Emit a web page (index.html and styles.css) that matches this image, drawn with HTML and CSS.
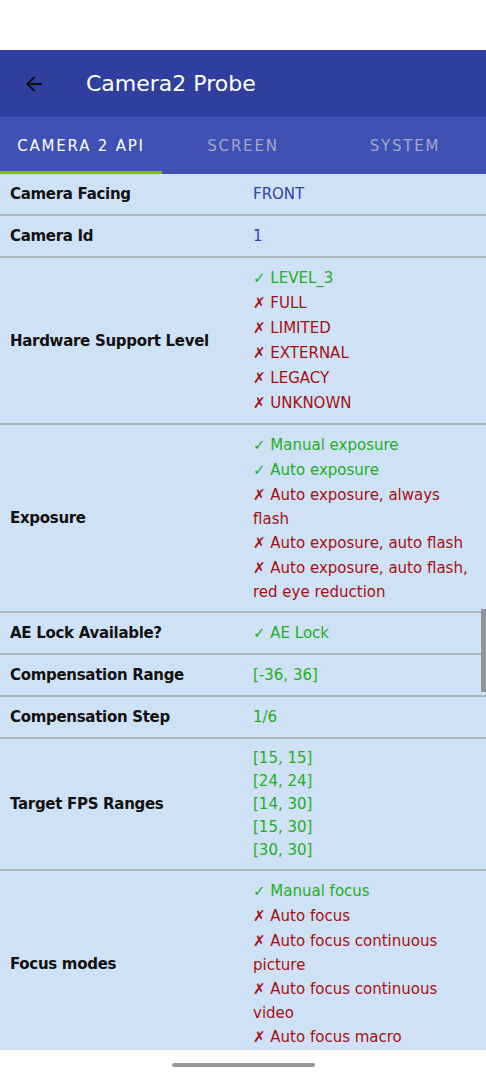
FILE: index.html
```html
<!DOCTYPE html>
<html lang="en">

<head>
    <meta charset="UTF-8">
    <meta name="viewport" content="width=device-width, initial-scale=1.0">
    <title>Camera2 Probe</title>
    <link rel="stylesheet" href="styles.css">
</head>

<body>
    <div class="phone">
        <div class="statusBar"></div>

        <div class="appBar">
            <svg class="backIcon" width="24" height="24" viewBox="0 0 24 24">
                <path d="M20 11H7.83l5.59-5.59L12 4l-8 8 8 8 1.41-1.41L7.83 13H20v-2z" fill="#111"/>
            </svg>
            <span class="title">Camera2 Probe</span>
        </div>

        <div class="tabBar">
            <div class="tabButtons">
                <button class="active">CAMERA 2 API</button>
                <button>SCREEN</button>
                <button>SYSTEM</button>
            </div>
            <span class="activeBar"></span>
        </div>

        <div class="content">
            <div class="row">
                <div class="label">Camera Facing</div>
                <div class="value blue"><div>FRONT</div></div>
            </div>
            <div class="row">
                <div class="label">Camera Id</div>
                <div class="value blue"><div>1</div></div>
            </div>
            <div class="row">
                <div class="label">Hardware Support Level</div>
                <div class="value">
                    <div class="yes"><b>✓</b> LEVEL_3</div>
                    <div class="no"><b>✗</b> FULL</div>
                    <div class="no"><b>✗</b> LIMITED</div>
                    <div class="no"><b>✗</b> EXTERNAL</div>
                    <div class="no"><b>✗</b> LEGACY</div>
                    <div class="no"><b>✗</b> UNKNOWN</div>
                </div>
            </div>
            <div class="row">
                <div class="label">Exposure</div>
                <div class="value">
                    <div class="yes"><b>✓</b> Manual exposure</div>
                    <div class="yes"><b>✓</b> Auto exposure</div>
                    <div class="no wrap"><b>✗</b> Auto exposure, always<br>flash</div>
                    <div class="no"><b>✗</b> Auto exposure, auto flash</div>
                    <div class="no wrap"><b>✗</b> Auto exposure, auto flash,<br>red eye reduction</div>
                </div>
            </div>
            <div class="row">
                <div class="label">AE Lock Available?</div>
                <div class="value"><div class="yes"><b>✓</b> AE Lock</div></div>
            </div>
            <div class="row">
                <div class="label">Compensation Range</div>
                <div class="value"><div class="yes">[-36, 36]</div></div>
            </div>
            <div class="row">
                <div class="label">Compensation Step</div>
                <div class="value"><div class="yes">1/6</div></div>
            </div>
            <div class="row">
                <div class="label">Target FPS Ranges</div>
                <div class="value numbers">
                    <div class="yes">[15, 15]</div>
                    <div class="yes">[24, 24]</div>
                    <div class="yes">[14, 30]</div>
                    <div class="yes">[15, 30]</div>
                    <div class="yes">[30, 30]</div>
                </div>
            </div>
            <div class="row">
                <div class="label">Focus modes</div>
                <div class="value">
                    <div class="yes"><b>✓</b> Manual focus</div>
                    <div class="no"><b>✗</b> Auto focus</div>
                    <div class="no wrap"><b>✗</b> Auto focus continuous<br>picture</div>
                    <div class="no wrap"><b>✗</b> Auto focus continuous<br>video</div>
                    <div class="no"><b>✗</b> Auto focus macro</div>
                </div>
            </div>

            <span class="scrollThumb"></span>
        </div>

        <div class="navBar">
            <span class="pill"></span>
        </div>
    </div>
</body>

</html>
```

FILE: styles.css
```css
* {
    margin: 0;
    padding: 0;
    box-sizing: border-box;
    font-family: "DejaVu Sans", "Noto Sans", sans-serif;
}

body {
    background-color: #fff;
}

.phone {
    width: 486px;
    height: 1080px;
    display: flex;
    flex-direction: column;
    overflow: hidden;
}

.statusBar {
    height: 50px;
    background-color: #fff;
}

.appBar {
    height: 67px;
    background-color: #303f9f;
    display: flex;
    align-items: center;
    padding-left: 22px;
}

.appBar .backIcon {
    margin-right: 40px;
}

.appBar .title {
    color: #fff;
    font-size: 22px;
}

.tabBar {
    position: relative;
    height: 57px;
    background-color: #3f51b5;
}

.tabBar .tabButtons {
    display: flex;
    height: 100%;
}

.tabBar .tabButtons button {
    flex: 1;
    border: none;
    outline: none;
    background-color: transparent;
    color: #a3a8c9;
    font-size: 15px;
    letter-spacing: 1.8px;
    padding-bottom: 0;
}

.tabBar .tabButtons button.active {
    color: #fff;
}

.tabBar .activeBar {
    position: absolute;
    left: 0;
    bottom: 0;
    width: 162px;
    height: 3px;
    background-color: #7cc400;
}

.content {
    position: relative;
    flex: 1;
    overflow: hidden;
    background-color: #cfe2f5;
}

.row {
    display: grid;
    grid-template-columns: 243px 243px;
    border-bottom: 2px solid #aeb6be;
    padding: 7.5px 0;
}

.row .label {
    display: flex;
    align-items: center;
    padding-left: 10px;
    font-size: 15px;
    font-weight: bold;
    color: #111;
    letter-spacing: -0.3px;
}

.row .value {
    padding-left: 10px;
    font-size: 15px;
    line-height: 25px;
}

.row .value .wrap {
    line-height: 24px;
}

.row .value.numbers {
    line-height: 23px;
}

.blue {
    color: #3540a6;
}

.yes {
    color: #1fae1f;
}

.no {
    color: #a50f14;
}

.scrollThumb {
    position: absolute;
    right: 0;
    top: 435px;
    width: 5px;
    height: 83px;
    background-color: #8d959e;
}

.navBar {
    height: 30px;
    background-color: #fff;
    display: flex;
    justify-content: center;
    align-items: center;
}

.navBar .pill {
    width: 143px;
    height: 4px;
    border-radius: 2px;
    background-color: #999;
}
```
